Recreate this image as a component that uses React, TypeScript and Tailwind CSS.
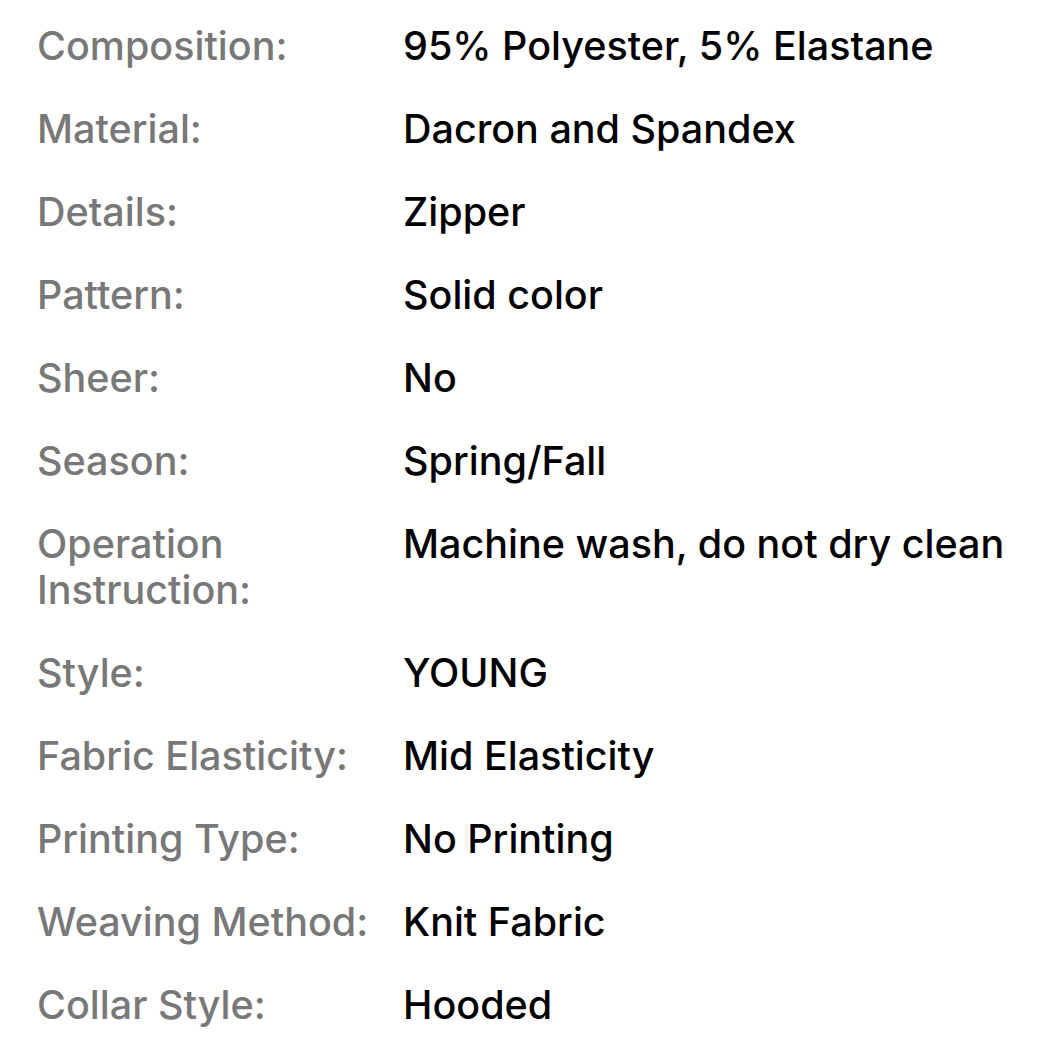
const specs: [string, string][] = [
  ['Composition:', '95% Polyester, 5% Elastane'],
  ['Material:', 'Dacron and Spandex'],
  ['Details:', 'Zipper'],
  ['Pattern:', 'Solid color'],
  ['Sheer:', 'No'],
  ['Season:', 'Spring/Fall'],
  ['Operation Instruction:', 'Machine wash, do not dry clean'],
  ['Style:', 'YOUNG'],
  ['Fabric Elasticity:', 'Mid Elasticity'],
  ['Printing Type:', 'No Printing'],
  ['Weaving Method:', 'Knit Fabric'],
  ['Collar Style:', 'Hooded'],
];

export default function App() {
  return (
    <div className="w-[1053px] h-[1046px] bg-white overflow-hidden pl-[37px] pt-[23px] font-['Inter',sans-serif]">
      <dl className="grid grid-cols-[366px_1fr] gap-y-[37px] text-[39.5px] leading-[46px] font-medium">
        {specs.map(([label, value]) => (
          <div key={label} className="contents">
            <dt className="text-[#787878] pr-4">{label}</dt>
            <dd className="text-black">{value}</dd>
          </div>
        ))}
      </dl>
    </div>
  );
}
